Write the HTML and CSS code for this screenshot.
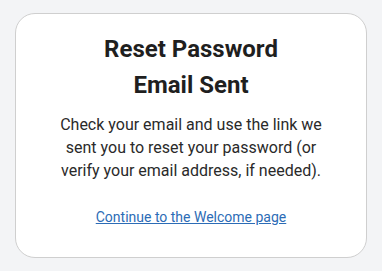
FILE: index.html
```html
<!DOCTYPE html>
<html lang="en">
<head>
<meta charset="utf-8">
<title>Reset Password Email Sent</title>
<link rel="stylesheet" href="styles.css">
</head>
<body>
<main class="card">
  <h1 class="title">Reset Password<br>Email Sent</h1>
  <p class="message">Check your email and use the link we sent you to reset your password (or verify your email address, if needed).</p>
  <a class="link" href="#">Continue to the Welcome page</a>
</main>
</body>
</html>
```
FILE: styles.css
```css
html, body {
  margin: 0;
  padding: 0;
}
body {
  background: #f3f4f6;
  font-family: Roboto, "Liberation Sans", sans-serif;
  color: #212121;
  min-height: 100vh;
  display: flex;
  align-items: center;
  justify-content: center;
}
.card {
  box-sizing: border-box;
  width: 352px;
  height: 245px;
  background: #ffffff;
  border: 1px solid #cfcfcf;
  border-radius: 20px;
  padding: 17px 24px;
  display: flex;
  flex-direction: column;
  align-items: center;
  text-align: center;
}
.title {
  margin: 0;
  font-size: 24px;
  line-height: 36px;
  font-weight: 700;
  color: #1f1f1f;
}
.message {
  margin: 10px 0 0;
  max-width: 275px;
  font-size: 16px;
  line-height: 23px;
  color: #2a2a2a;
}
.link {
  margin-top: 27px;
  font-size: 14px;
  color: #2c6cb6;
  text-decoration: underline;
}
```
